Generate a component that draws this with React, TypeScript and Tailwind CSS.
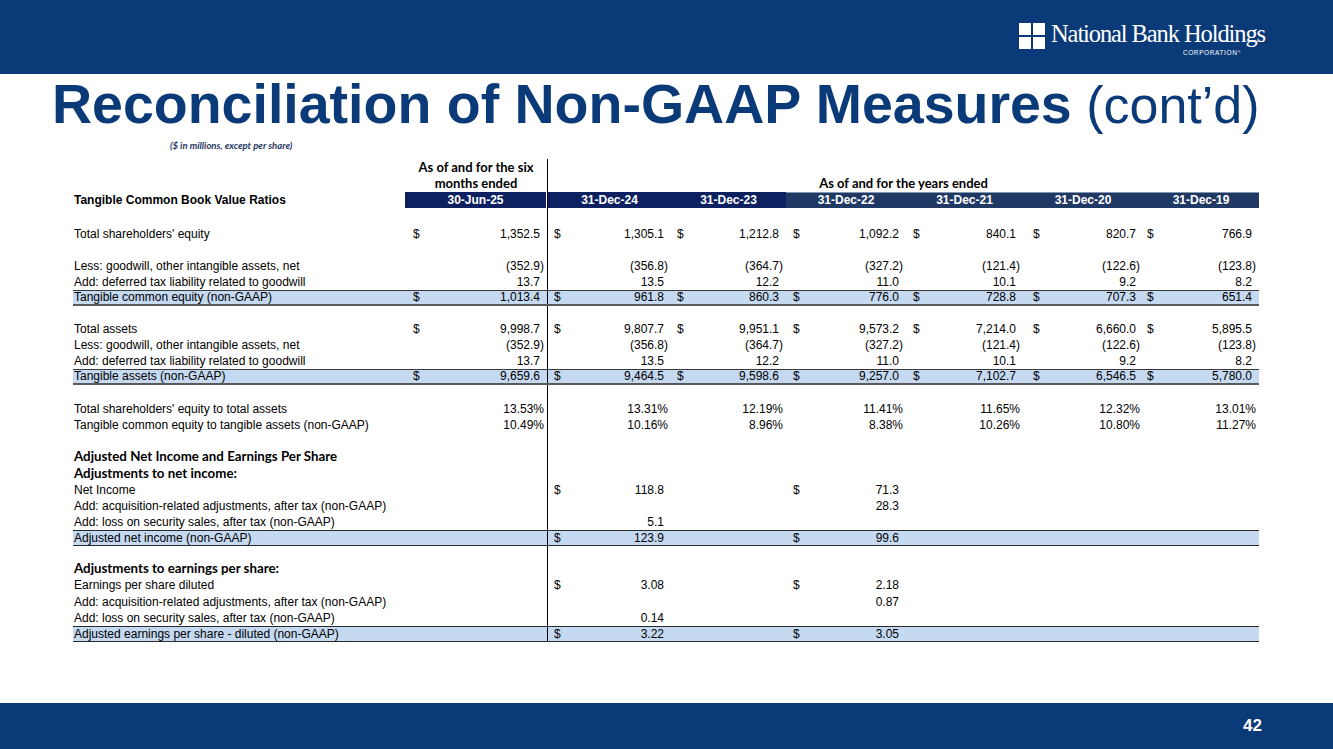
const GRID = "grid grid-cols-[332px_143px_123px_115px_120px_117px_120px_116px]";
const PL = ["pl-[8px]", "pl-[6px]", "pl-[6px]", "pl-[7px]", "pl-[7px]", "pl-[10px]", "pl-[4px]"];

type Row =
  | { kind: "spacer"; h: string }
  | { kind: "head"; label: string; h?: string }
  | { kind: "data"; label: string; cells: string[]; hl?: "double" | "single"; h?: string };

const rows: Row[] = [
  { kind: "spacer", h: "h-[18px]" },
  {
    kind: "data",
    label: "Total shareholders' equity",
    cells: ["$1,352.5", "$1,305.1", "$1,212.8", "$1,092.2", "$840.1", "$820.7", "$766.9"],
  },
  { kind: "spacer", h: "h-[16px]" },
  {
    kind: "data",
    label: "Less: goodwill, other intangible assets, net",
    cells: ["(352.9)", "(356.8)", "(364.7)", "(327.2)", "(121.4)", "(122.6)", "(123.8)"],
  },
  {
    kind: "data",
    label: "Add: deferred tax liability related to goodwill",
    cells: ["13.7", "13.5", "12.2", "11.0", "10.1", "9.2", "8.2"],
  },
  {
    kind: "data",
    label: "Tangible common equity (non-GAAP)",
    cells: ["$1,013.4", "$961.8", "$860.3", "$776.0", "$728.8", "$707.3", "$651.4"],
    hl: "double",
  },
  { kind: "spacer", h: "h-[15px]" },
  {
    kind: "data",
    label: "Total assets",
    cells: ["$9,998.7", "$9,807.7", "$9,951.1", "$9,573.2", "$7,214.0", "$6,660.0", "$5,895.5"],
  },
  {
    kind: "data",
    label: "Less: goodwill, other intangible assets, net",
    cells: ["(352.9)", "(356.8)", "(364.7)", "(327.2)", "(121.4)", "(122.6)", "(123.8)"],
  },
  {
    kind: "data",
    label: "Add: deferred tax liability related to goodwill",
    cells: ["13.7", "13.5", "12.2", "11.0", "10.1", "9.2", "8.2"],
  },
  {
    kind: "data",
    label: "Tangible assets (non-GAAP)",
    cells: ["$9,659.6", "$9,464.5", "$9,598.6", "$9,257.0", "$7,102.7", "$6,546.5", "$5,780.0"],
    hl: "double",
  },
  { kind: "spacer", h: "h-[16px]" },
  {
    kind: "data",
    label: "Total shareholders' equity to total assets",
    cells: ["13.53%", "13.31%", "12.19%", "11.41%", "11.65%", "12.32%", "13.01%"],
  },
  {
    kind: "data",
    label: "Tangible common equity to tangible assets (non-GAAP)",
    cells: ["10.49%", "10.16%", "8.96%", "8.38%", "10.26%", "10.80%", "11.27%"],
  },
  { kind: "spacer", h: "h-[15px]" },
  { kind: "head", label: "Adjusted Net Income and Earnings Per Share" },
  { kind: "head", label: "Adjustments to net income:" },
  { kind: "data", label: "Net Income", cells: ["", "$118.8", "", "$71.3", "", "", ""] },
  {
    kind: "data",
    label: "Add: acquisition-related adjustments, after tax (non-GAAP)",
    cells: ["", "", "", "28.3", "", "", ""],
  },
  {
    kind: "data",
    label: "Add: loss on security sales, after tax (non-GAAP)",
    cells: ["", "5.1", "", "", "", "", ""],
  },
  {
    kind: "data",
    label: "Adjusted net income (non-GAAP)",
    cells: ["", "$123.9", "", "$99.6", "", "", ""],
    hl: "single",
  },
  { kind: "spacer", h: "h-[14px]" },
  { kind: "head", label: "Adjustments to earnings per share:" },
  { kind: "data", label: "Earnings per share diluted", cells: ["", "$3.08", "", "$2.18", "", "", ""], h: "h-[17px]" },
  {
    kind: "data",
    label: "Add: acquisition-related adjustments, after tax (non-GAAP)",
    cells: ["", "", "", "0.87", "", "", ""],
  },
  {
    kind: "data",
    label: "Add: loss on security sales, after tax (non-GAAP)",
    cells: ["", "0.14", "", "", "", "", ""],
  },
  {
    kind: "data",
    label: "Adjusted earnings per share - diluted (non-GAAP)",
    cells: ["", "$3.22", "", "$3.05", "", "", ""],
    hl: "single",
  },
];

const dates = ["31-Dec-24", "31-Dec-23", "31-Dec-22", "31-Dec-21", "31-Dec-20", "31-Dec-19"];

function ValueCell({ text, i }: { text: string; i: number }) {
  const dollar = text.startsWith("$");
  const value = dollar ? text.slice(1) : text;
  const pad = value !== "" && !value.endsWith(")") && !value.endsWith("%");
  return (
    <div
      className={`flex justify-between pr-[3px] ${PL[i]} ${i === 0 ? "border-r border-black" : ""}`}
    >
      <span>{dollar ? "$" : ""}</span>
      <span>
        {value}
        {pad && <span className="invisible">)</span>}
      </span>
    </div>
  );
}

function Logo() {
  return (
    <div className="flex items-start gap-[6px]">
      <div className="mt-[1px] grid h-[26px] w-[26px] grid-cols-2 grid-rows-2 gap-[2px]">
        <div className="bg-white" />
        <div className="bg-white" />
        <div className="bg-white" />
        <div className="bg-white" />
      </div>
      <div className="flex flex-col">
        <span className="font-['Liberation_Serif',serif] text-[24.5px] leading-[24px] tracking-[-1.1px] text-white">
          National Bank Holdings
        </span>
        <span className="mt-[4px] self-end pr-[24px] font-['Liberation_Sans',sans-serif] text-[6.5px] leading-[6px] tracking-[0.6px] text-white">
          CORPORATION<sup className="text-[4px]">®</sup>
        </span>
      </div>
    </div>
  );
}

export default function App() {
  return (
    <div className="flex h-[749px] w-[1333px] flex-col bg-white font-['Liberation_Sans',Arial,sans-serif] text-black">
      <div className="flex h-[74px] items-start justify-end bg-[#0b3a78] pr-[68px] pt-[22px]">
        <Logo />
      </div>

      <div className="mt-[3px] h-[55px] pl-[52px] text-[55.5px] leading-[55px] whitespace-nowrap text-[#0b3a78]">
        <span className="font-bold">Reconciliation of Non-GAAP Measures</span>
        <span className="text-[52px]"> (cont’d)</span>
      </div>

      <div className="mt-[8px] h-[12px] pl-[170px] font-['Lato',sans-serif] text-[9.5px] leading-[12px] font-bold italic text-[#1f3864]">
        ($ in millions, except per share)
      </div>

      <div className="mt-[7px] ml-[73px] w-[1186px] text-[12px] leading-[16px]">
        {/* header */}
        <div className={`${GRID} h-[16px] font-['Lato',sans-serif] text-[13px] font-bold`}>
          <div />
          <div className="border-r border-black text-center">As of and for the six</div>
          <div className="col-span-6" />
        </div>
        <div className={`${GRID} h-[17px] font-['Lato',sans-serif] text-[13px] leading-[17px] font-bold`}>
          <div />
          <div className="border-r border-black text-center">months ended</div>
          <div className="col-span-6 text-center">As of and for the years ended</div>
        </div>
        <div className={`${GRID} h-[16px] font-bold`}>
          <div className="pl-[1px]">Tangible Common Book Value Ratios</div>
          <div className="border-r border-black">
            <div className="mr-[1px] h-full bg-[#0d2160] text-center text-white">30-Jun-25</div>
          </div>
          {dates.map((d, i) => (
            <div
              key={d}
              className={`text-center text-white ${i < 2 ? "bg-[#0d2160]" : "border-t border-[#8497b0] bg-[#1f3864] leading-[15px]"}`}
            >
              {d}
            </div>
          ))}
        </div>

        {rows.map((r, idx) => {
          if (r.kind === "spacer") {
            return (
              <div key={idx} className={`${GRID} ${r.h}`}>
                <div />
                <div className="border-r border-black" />
              </div>
            );
          }
          if (r.kind === "head") {
            return (
              <div
                key={idx}
                className={`${GRID} h-[17px] font-['Lato',sans-serif] text-[13.3px] leading-[17px] font-bold`}
              >
                <div className="pl-[1px] whitespace-nowrap">{r.label}</div>
                <div className="border-r border-black" />
              </div>
            );
          }
          const hl =
            r.hl === "double"
              ? "bg-[#c5d9f1] border-t border-b-2 border-t-[#3a3a3a] border-b-[#5a5a5a] leading-[13px]"
              : r.hl === "single"
                ? "bg-[#c5d9f1] border-t border-b border-[#2a2a2a] leading-[14px]"
                : "";
          return (
            <div key={idx} className={`${GRID} ${r.h ?? "h-[16px]"} ${hl}`}>
              <div className="pl-[1px] whitespace-nowrap">{r.label}</div>
              {r.cells.map((c, i) => (
                <ValueCell key={i} text={c} i={i} />
              ))}
            </div>
          );
        })}
      </div>

      <div className="mt-auto flex h-[46px] items-center justify-end bg-[#0b3a78] pr-[71px]">
        <span className="text-[17px] font-bold text-white">42</span>
      </div>
    </div>
  );
}
